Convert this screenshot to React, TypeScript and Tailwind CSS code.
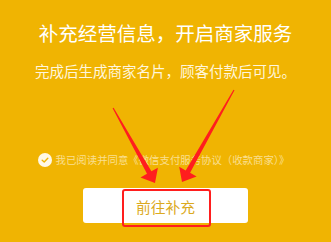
import React from "react";

export default function App() {
  return (
    <div
      className="relative w-[331px] h-[242px] overflow-hidden bg-[#F0B402] flex flex-col items-center"
      style={{ fontFamily: '"Noto Sans CJK SC", "Noto Sans", sans-serif' }}
    >
      <div className="mt-[23px] text-[19.5px] leading-[20px] text-white whitespace-nowrap">
        补充经营信息，开启商家服务
      </div>
      <div className="mt-[18px] text-[14.5px] leading-[20px] text-[#FFF6DC] whitespace-nowrap">
        完成后生成商家名片，顾客付款后可见。
      </div>
      <div className="mt-[72px] flex items-center gap-[4px] h-[14px] pr-[4px]">
        <div className="w-[14px] h-[14px] rounded-full bg-[#FFF8E6] flex items-center justify-center">
          <svg width="10" height="10" viewBox="0 0 10 10">
            <path d="M2.2 5.2 L4.2 7 L7.8 3.2" fill="none" stroke="#F0B402" strokeWidth="1.4" strokeLinecap="round" strokeLinejoin="round" />
          </svg>
        </div>
        <span className="text-[10.4px] leading-[14px] text-[#FADF90] whitespace-nowrap">
          我已阅读并同意《微信支付服务协议（收款商家）》
        </span>
      </div>
      <div className="mt-[21px] w-[165px] h-[35px] rounded-[3px] bg-white flex items-center justify-center">
        <span className="text-[14.8px] leading-[20px] text-[#DCAA1E] mt-[3px]">前往补充</span>
      </div>
      <div className="absolute left-[122px] top-[189px] w-[89px] h-[38px] border-[2.5px] border-[#FF1E1E] rounded-[3px]" />
      <svg className="absolute left-0 top-0" width="331" height="242" viewBox="0 0 331 242">
        <polygon points="112.6,108.3 113.6,107.8 151.4,171.3 157.9,167.7 155,183 140.5,177.4 147,173.7" fill="#FF1E1E" />
        <polygon points="234.5,90.3 233.5,89.8 185.7,170.4 179.2,166.7 182,182 196.6,176.5 190.1,172.8" fill="#FF1E1E" />
      </svg>
    </div>
  );
}
